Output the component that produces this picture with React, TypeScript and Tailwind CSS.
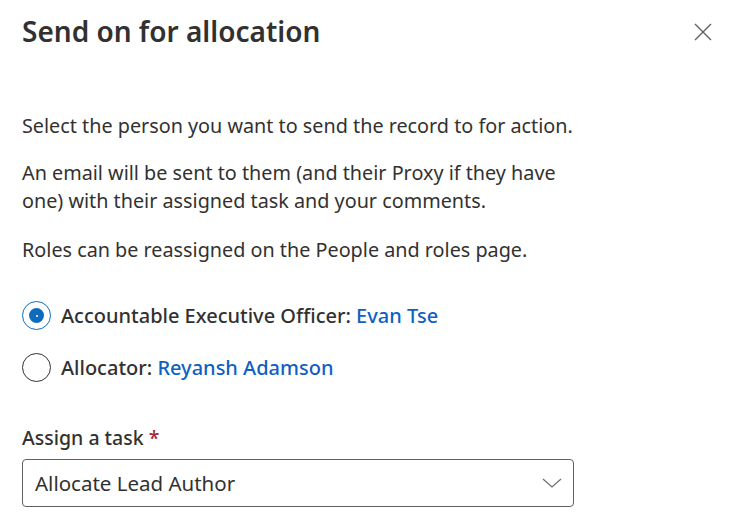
import { useState } from 'react'

const people = [
  { id: 'aeo', role: 'Accountable Executive Officer', name: 'Evan Tse' },
  { id: 'alloc', role: 'Allocator', name: 'Reyansh Adamson' },
]

export default function App() {
  const [selected, setSelected] = useState('aeo')

  return (
    <div
      className="w-[732px] h-[532px] overflow-hidden bg-white text-[#323130]"
      style={{ fontFamily: '"Noto Sans", "Open Sans", sans-serif' }}
    >
      <div className="flex items-start justify-between pl-[22px] pr-[20px] pt-[12px]">
        <h1 className="text-[28px] leading-[38px] font-semibold text-[#323130]">Send on for allocation</h1>
        <button className="mt-[11px] w-[18px] h-[18px] text-[#616161]" aria-label="Close">
          <svg viewBox="0 0 18 18" width="18" height="18" fill="none" stroke="currentColor" strokeWidth="1.4">
            <path d="M1 1 L17 17 M17 1 L1 17" />
          </svg>
        </button>
      </div>

      <div className="px-[22px] pt-[62px] text-[19.8px] leading-[28px] w-[608px]">
        <p>Select the person you want to send the record to for action.</p>
        <p className="mt-[19px]">
          An email will be sent to them (and their Proxy if they have one) with their assigned task and your comments.
        </p>
        <p className="mt-[21px]">Roles can be reassigned on the People and roles page.</p>

        <div className="mt-[37px] flex flex-col gap-[23px]">
          {people.map((p) => (
            <label key={p.id} className="flex items-center gap-[10px] cursor-pointer">
              <span
                onClick={() => setSelected(p.id)}
                className={
                  selected === p.id
                    ? 'w-[29px] h-[29px] rounded-full border border-[#0f6cbd] flex items-center justify-center'
                    : 'w-[29px] h-[29px] rounded-full border border-[#323130] flex items-center justify-center'
                }
              >
                {selected === p.id && (
                  <span className="w-[15px] h-[15px] rounded-full bg-[#0f6cbd] flex items-center justify-center">
                    <span className="w-[2px] h-[2px] rounded-full bg-white" />
                  </span>
                )}
              </span>
              <span className="font-medium text-[20px]">
                {p.role}: <span className="text-[#0f5fc5]">{p.name}</span>
              </span>
            </label>
          ))}
        </div>

        <div className="mt-[43px]">
          <div className="font-medium text-[19.5px] leading-[26px]">
            Assign a task <span className="text-[#a4262c]">*</span>
          </div>
          <div className="mt-[8px] w-[552px] h-[48px] rounded-[4px] border border-[#616161] flex items-center justify-between pl-[12px] pr-[11px]">
            <span className="text-[20.5px] text-[#323130]">Allocate Lead Author</span>
            <svg viewBox="0 0 20 10" width="20" height="10" fill="none" stroke="#707070" strokeWidth="1.3">
              <path d="M1 1 L10 9 L19 1" />
            </svg>
          </div>
        </div>
      </div>
    </div>
  )
}
